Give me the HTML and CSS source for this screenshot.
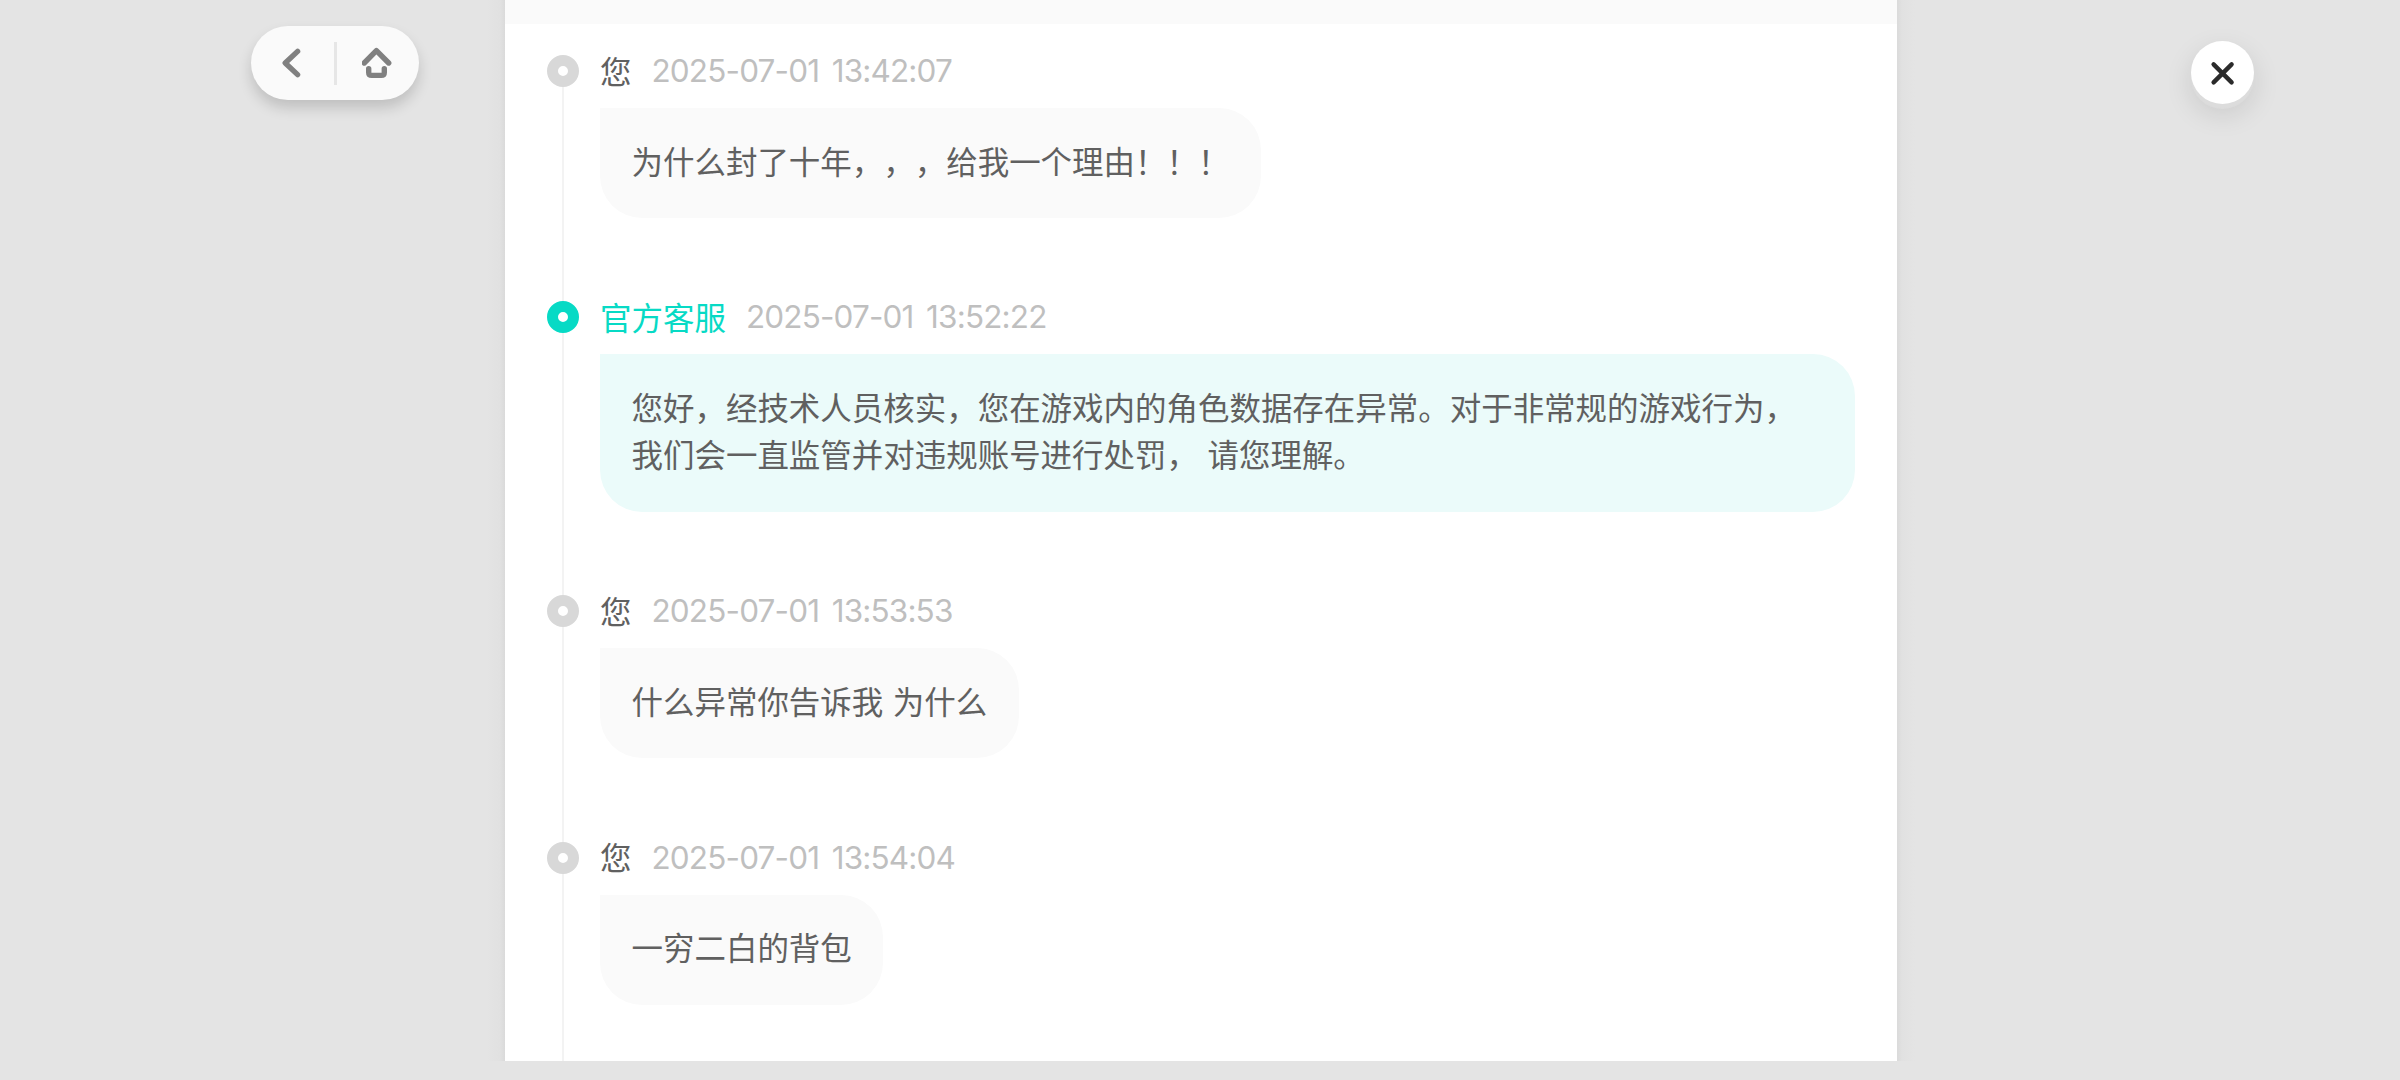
FILE: index.html
```
<!DOCTYPE html>
<html lang="zh-CN">
<head>
    <meta charset="UTF-8">
    <meta name="viewport" content="width=device-width, initial-scale=1.0">
    <title>客服记录</title>
    <link rel="stylesheet" href="styles.css">
</head>
<body>
    <div class="page">
        <div class="side side-left">
            <div class="nav-pill">
                <button class="nav-button" aria-label="返回">
                    <svg width="32" height="32" viewBox="0 0 32 32">
                        <path d="M21.6 4.4 9.2 16l12.4 11.6" />
                    </svg>
                </button>
                <span class="nav-divider"></span>
                <button class="nav-button" aria-label="首页">
                    <svg width="32" height="32" viewBox="0 0 32 32">
                        <path d="M2.2 16 14.4 3.6 26.7 16" />
                        <path d="M6.7 21.6v3.8q0 3 3 3h9.6q3 0 3-3v-3.8" />
                    </svg>
                </button>
            </div>
        </div>

        <main class="panel">
            <div class="panel-top"></div>
            <ul class="timeline">
                <li class="item">
                    <div class="marker"><span class="dot"></span></div>
                    <div class="content">
                        <div class="meta">
                            <span class="name">您</span>
                            <span class="time">2025-07-01 13:42:07</span>
                        </div>
                        <div class="bubble">为什么封了十年，，，给我一个理由！！！</div>
                    </div>
                </li>
                <li class="item official">
                    <div class="marker"><span class="dot"></span></div>
                    <div class="content">
                        <div class="meta">
                            <span class="name">官方客服</span>
                            <span class="time">2025-07-01 13:52:22</span>
                        </div>
                        <div class="bubble">您好，经技术人员核实，您在游戏内的角色数据存在异常。对于非常规的游戏行为，我们会一直监管并对违规账号进行处罚， 请您理解。</div>
                    </div>
                </li>
                <li class="item">
                    <div class="marker"><span class="dot"></span></div>
                    <div class="content">
                        <div class="meta">
                            <span class="name">您</span>
                            <span class="time">2025-07-01 13:53:53</span>
                        </div>
                        <div class="bubble">什么异常你告诉我 为什么</div>
                    </div>
                </li>
                <li class="item">
                    <div class="marker"><span class="dot"></span></div>
                    <div class="content">
                        <div class="meta">
                            <span class="name">您</span>
                            <span class="time">2025-07-01 13:54:04</span>
                        </div>
                        <div class="bubble">一穷二白的背包</div>
                    </div>
                </li>
            </ul>
        </main>

        <div class="side side-right">
            <button class="close-button" aria-label="关闭">
                <svg width="28" height="28" viewBox="0 0 28 28">
                    <path d="M4.6 5.4l18 18M22.6 5.4l-18 18" />
                </svg>
            </button>
        </div>
    </div>
</body>
</html>
```

FILE: styles.css
```
* {
    box-sizing: border-box;
}

body {
    margin: 0;
    background-color: #e4e4e4;
    font-family: "Noto Sans CJK SC", sans-serif;
    font-size: 31.48px;
    color: #606060;
    text-spacing-trim: space-all;
}

button {
    border: none;
    padding: 0;
    background: none;
    cursor: pointer;
}

svg {
    display: block;
    fill: none;
    stroke-linecap: round;
    stroke-linejoin: round;
}

.page {
    display: flex;
    align-items: flex-start;
    width: 2400px;
    height: 1080px;
    overflow: hidden;
}

/* Side gutters */
.side {
    flex: none;
    height: 1061px;
}

.side-left {
    width: 505px;
    padding: 26px 0 0 251px;
    background: linear-gradient(to left, #dadada, #e1e1e1 5px, #e4e4e4 18px);
}

.side-right {
    width: 503px;
    padding: 41px 0 0 294px;
    background: linear-gradient(to right, #dadada, #e1e1e1 5px, #e4e4e4 18px);
}

.nav-pill {
    display: flex;
    align-items: center;
    width: 168px;
    height: 74px;
    border-radius: 37px;
    background-color: #fafafa;
    box-shadow: 0 8px 14px rgba(0,0,0,0.16);
}

.nav-button {
    flex: 1;
    display: flex;
    justify-content: center;
    stroke: #808080;
    stroke-width: 5.4;
}

.nav-divider {
    width: 3px;
    height: 43px;
    background-color: #e6e6e6;
}

.close-button {
    display: flex;
    align-items: center;
    justify-content: center;
    width: 63px;
    height: 63px;
    border-radius: 50%;
    background-color: #fff;
    stroke: #2b2b2b;
    stroke-width: 4.4;
    box-shadow: 0 5px 1px #dcdcdc, 0 10px 28px rgba(0,0,0,0.12);
}

/* Conversation */
.panel {
    flex: none;
    width: 1392px;
    height: 1061px;
    background-color: #fff;
    overflow: hidden;
}

.panel-top {
    height: 24px;
    background-color: #fafafa;
}

.timeline {
    list-style: none;
    margin: 0;
    padding: 31px 42px 0;
}

.item {
    display: flex;
}

.marker {
    flex: none;
    display: flex;
    flex-direction: column;
    align-items: center;
    width: 32px;
    margin-right: 21px;
}

/* Line down to the next dot */
.marker::after {
    content: "";
    flex: 1;
    width: 2px;
    background-color: #f3f3f3;
}

.dot {
    width: 32px;
    height: 32px;
    border: 11px solid #d8d8d8;
    border-radius: 50%;
    background-color: #fff;
}

.content {
    flex: 1;
    padding-bottom: 83.2px;
}

.meta {
    display: flex;
    align-items: center;
    height: 32px;
    margin-bottom: 21px;
    line-height: 32px;
    white-space: nowrap;
}

.name {
    padding-bottom: 3px;
}

.time {
    margin-left: 20px;
    font-family: Inter, "Noto Sans CJK SC", sans-serif;
    font-size: 31.5px;
    letter-spacing: -0.85px;
    word-spacing: 4.5px;
    color: #bfbfbf;
}

.bubble {
    width: fit-content;
    padding: 28.5px 31.5px 34.5px;
    border-radius: 0 42px 42px 42px;
    background-color: #fafafa;
    line-height: 47.25px;
    word-spacing: 2.5px;
}

.official .dot {
    border-color: #07dac5;
}

.official .name {
    color: #07dac5;
}

.official .bubble {
    background-color: #ebfbfa;
}
```
